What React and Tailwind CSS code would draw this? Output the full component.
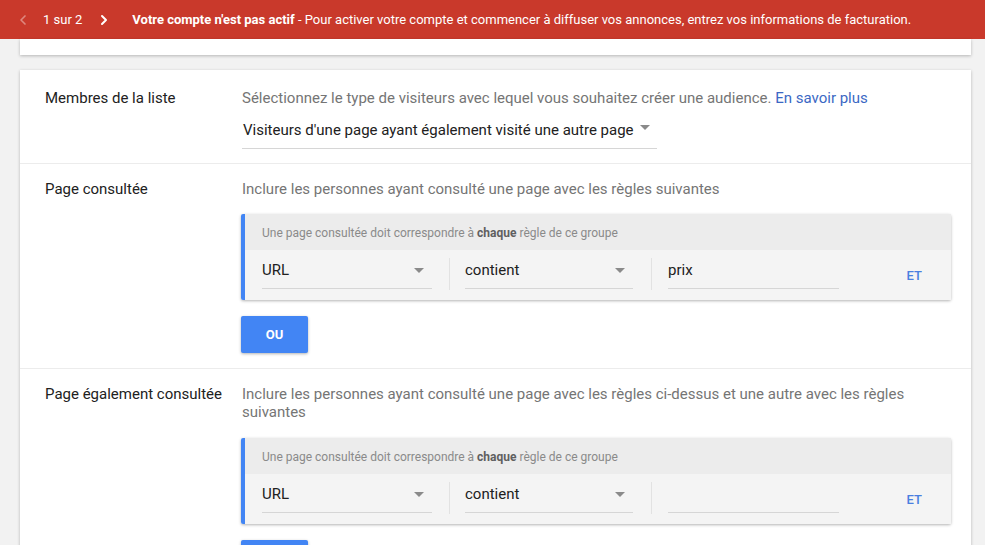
import { ChevronLeft, ChevronRight } from 'lucide-react'

const font = { fontFamily: 'Roboto, "Liberation Sans", sans-serif' }

function Caret() {
  return (
    <svg className="h-[5px] w-[10px] shrink-0" viewBox="0 0 10 5">
      <path d="M0 0h10L5 5z" fill="#8a8a8a" />
    </svg>
  )
}

function Field({ value, select, width }) {
  return (
    <div className={`flex h-[39px] ${width} items-center justify-between border-b border-[#d6d6d6] pr-[8px] pt-[3px]`}>
      <span className="text-[15px] text-[#212121]">{value}</span>
      {select && <Caret />}
    </div>
  )
}

function RuleGroup({ value }) {
  return (
    <div className="rounded-[2px] border-l-4 border-[#4285f4] shadow-[0_1px_3px_rgba(0,0,0,0.3)]">
      <div className="flex h-[36px] items-center bg-[#ececec] pl-[17px] pt-[2px] text-[12px] text-[#8a8a8a]">
        Une page consultée doit correspondre à&nbsp;<b className="font-bold text-[#5f5f5f]">chaque</b>&nbsp;règle de ce groupe
      </div>
      <div className="flex h-[50px] items-start bg-[#f4f4f4] pl-[17px]">
        <Field value="URL" select width="w-[170px]" />
        <div className="ml-[17px] mr-[15px] mt-[8px] h-[32px] w-px bg-[#e2e2e2]" />
        <Field value="contient" select width="w-[168px]" />
        <div className="ml-[18px] mr-[16px] mt-[8px] h-[32px] w-px bg-[#e2e2e2]" />
        <Field value={value} width="w-[171px]" />
        <span className="ml-auto mr-[29px] mt-[16px] text-[13px] font-medium text-[#4a7fe0]">ET</span>
      </div>
    </div>
  )
}

function OrButton() {
  return (
    <button className="mt-[16px] h-[37px] w-[67px] rounded-[2px] bg-[#4285f4] text-[13px] font-bold text-white shadow-[0_1px_3px_rgba(0,0,0,0.3)]">
      OU
    </button>
  )
}

export default function App() {
  return (
    <div className="relative h-[545px] w-[985px] overflow-hidden bg-[#f2f2f2]" style={font}>
      <div className="flex h-[39px] items-center bg-[#c9392b] text-[13px] text-white">
        <ChevronLeft className="ml-[15px] h-[16px] w-[16px] text-white/40" strokeWidth={2.5} />
        <span className="ml-[12px]">1 sur 2</span>
        <ChevronRight className="ml-[14px] h-[16px] w-[16px]" strokeWidth={3} />
        <span className="ml-[20px]">
          <b className="font-bold">Votre compte n'est pas actif</b> - Pour activer votre compte et commencer à diffuser vos annonces, entrez vos informations de facturation.
        </span>
      </div>

      <div className="mx-[20px] w-[951px]">
        <div className="h-[16px] bg-white shadow-[0_1px_3px_rgba(0,0,0,0.25)]" />

        <div className="mt-[15px] bg-white shadow-[0_1px_3px_rgba(0,0,0,0.25)]">
          <div className="flex border-b border-[#ececec] pb-[14px] pt-[17px]">
            <div className="w-[222px] shrink-0 pl-[25px] text-[15px] text-[#212121]">Membres de la liste</div>
            <div className="flex-1 pr-[20px]">
              <p className="text-[15px] text-[#757575]">
                Sélectionnez le type de visiteurs avec lequel vous souhaitez créer une audience.{' '}
                <a className="text-[#3b68c4]">En savoir plus</a>
              </p>
              <div className="mt-[9px] flex h-[30px] w-[415px] items-start gap-[6px] border-b border-[#d6d6d6] pl-px">
                <span className="text-[15px] text-[#212121]">Visiteurs d'une page ayant également visité une autre page</span>
                <span className="mt-[6px]"><Caret /></span>
              </div>
            </div>
          </div>

          <div className="flex border-b border-[#ececec] pb-[15px] pt-[14px]">
            <div className="w-[222px] shrink-0 pl-[25px] text-[15px] text-[#212121]">Page consultée</div>
            <div className="flex-1 pr-[20px]">
              <p className="text-[15px] text-[#757575]">Inclure les personnes ayant consulté une page avec les règles suivantes</p>
              <div className="ml-[-1px] mt-[14px]">
                <RuleGroup value="prix" />
              </div>
              <div className="ml-[-1px]">
                <OrButton />
              </div>
            </div>
          </div>

          <div className="flex pb-[14px] pt-[14px]">
            <div className="w-[222px] shrink-0 pl-[25px] text-[15px] text-[#212121]">Page également consultée</div>
            <div className="flex-1 pr-[20px]">
              <p className="pt-[2px] text-[15px] leading-[18px] text-[#757575]">
                Inclure les personnes ayant consulté une page avec les règles ci-dessus et une autre avec les règles suivantes
              </p>
              <div className="ml-[-1px] mt-[17px]">
                <RuleGroup value="" />
              </div>
              <div className="ml-[-1px]">
                <OrButton />
              </div>
            </div>
          </div>
        </div>
      </div>
    </div>
  )
}
